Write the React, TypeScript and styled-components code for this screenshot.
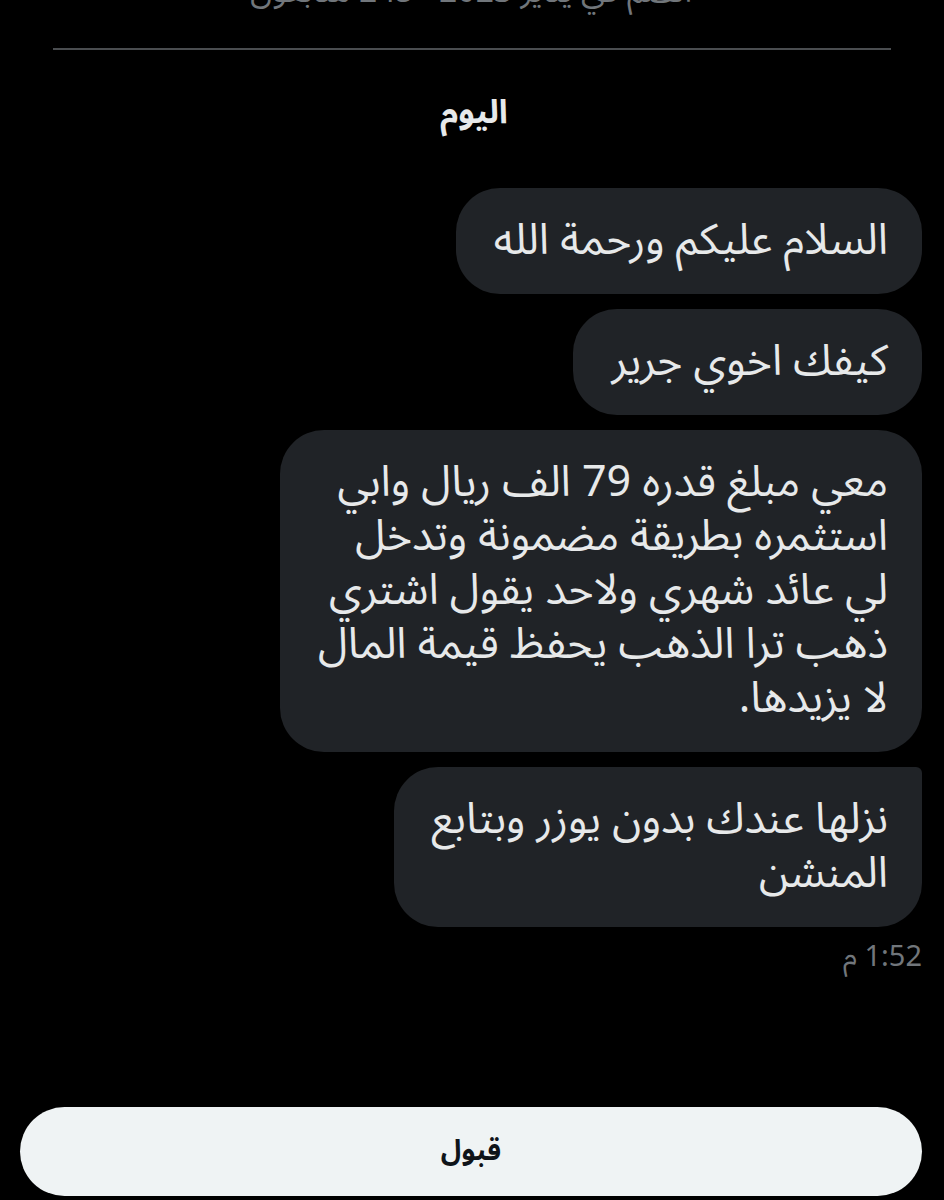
import * as React from "react";
import styled, { createGlobalStyle } from "styled-components";

const GlobalStyle = createGlobalStyle`
  html, body {
    margin: 0;
    padding: 0;
    background: #000;
  }
  body {
    font-family: "Noto Sans Arabic", "Noto Sans", "DejaVu Sans", sans-serif;
    color: #e7e9ea;
  }
`;

const Page = styled.div`
  width: 944px;
  height: 1200px;
  overflow: hidden;
  background: #000;
  display: flex;
  flex-direction: column;
  direction: rtl;
  padding: 0 22px 4px 20px;
  box-sizing: border-box;
`;

const Meta = styled.div`
  margin-top: -28px;
  font-size: 32px;
  line-height: 40px;
  color: #71767b;
  text-align: center;
  white-space: nowrap;
`;

const Divider = styled.hr`
  margin: 36px 31px 0 33px;
  border: none;
  height: 2px;
  background: #4a4d50;
`;

const DayLabel = styled.div`
  margin-top: 41px;
  text-align: center;
  font-size: 33px;
  line-height: 44px;
  font-weight: 700;
  color: #e7e9ea;
  padding-left: 6px;
`;

const MessageList = styled.div`
  margin-top: 53px;
  display: flex;
  flex-direction: column;
  align-items: flex-start;
  gap: 15px;
`;

const Bubble = styled.div<{ $last?: boolean }>`
  background: #202327;
  color: #e7e9ea;
  font-size: 43px;
  line-height: 54px;
  padding: 26px 34px 26px 38px;
  border-radius: ${(p) => (p.$last ? "44px 6px 44px 44px" : "44px")};
  white-space: nowrap;
`;

const Line = styled.span`
  display: block;
  height: 54px;
`;

const Timestamp = styled.div`
  margin-top: 12px;
  font-size: 29px;
  line-height: 36px;
  color: #71767b;
`;

const AcceptButton = styled.button`
  margin-top: auto;
  height: 89px;
  width: 100%;
  border: none;
  border-radius: 45px;
  background: #eff3f4;
  color: #0f1419;
  font-family: inherit;
  font-size: 28px;
  font-weight: 700;
  cursor: pointer;
`;

const messages: string[][] = [
  ["السلام عليكم ورحمة الله"],
  ["كيفك اخوي جرير"],
  [
    "معي مبلغ قدره 79 الف ريال وابي",
    "استثمره بطريقة مضمونة وتدخل",
    "لي عائد شهري ولاحد يقول اشتري",
    "ذهب ترا الذهب يحفظ قيمة المال",
    "لا يزيدها.",
  ],
  ["نزلها عندك بدون يوزر وبتابع", "المنشن"],
];

export default function App() {
  return (
    <>
      <GlobalStyle />
      <Page>
        <Meta>انضم في يناير 2023 · 245 متابعون</Meta>
        <Divider />
        <DayLabel>اليوم</DayLabel>
        <MessageList>
          {messages.map((lines, i) => (
            <Bubble key={i} $last={i === messages.length - 1}>
              {lines.map((line, j) => (
                <Line key={j}>{line}</Line>
              ))}
            </Bubble>
          ))}
        </MessageList>
        <Timestamp>1:52 م</Timestamp>
        <AcceptButton>قبول</AcceptButton>
      </Page>
    </>
  );
}
